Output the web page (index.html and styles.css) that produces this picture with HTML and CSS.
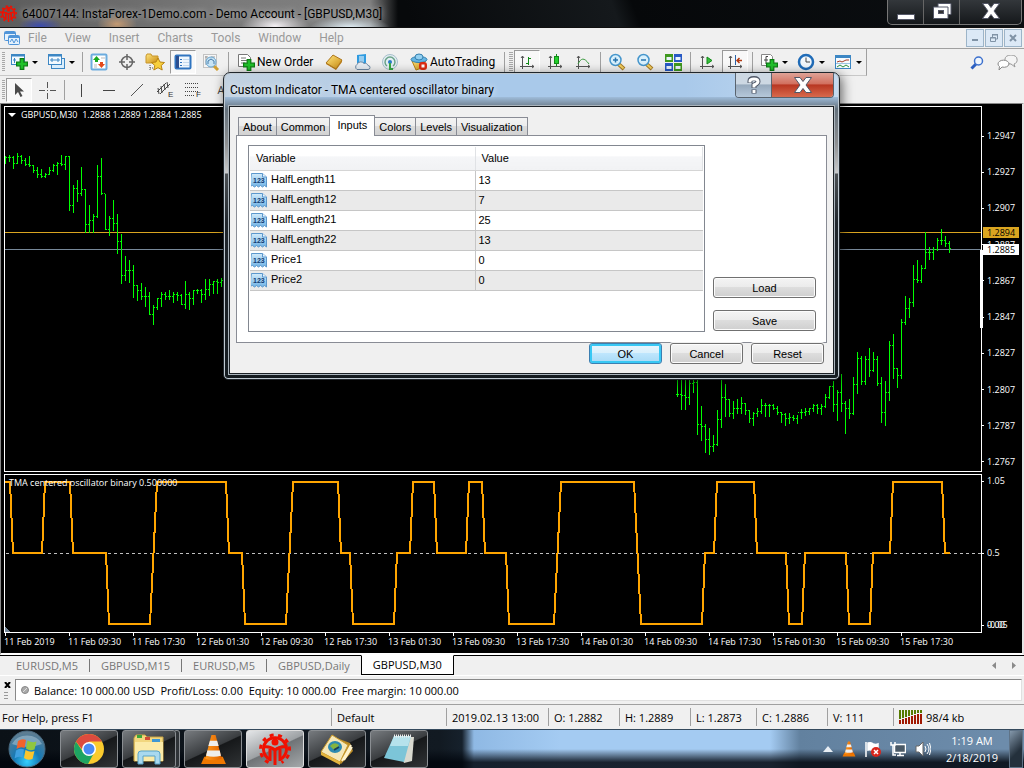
FILE: index.html
```html
<!DOCTYPE html>
<html lang="en">
<head>
  <meta charset="UTF-8" />
  <meta name="viewport" content="width=device-width, initial-scale=1.0" />
  <title>64007144: InstaForex-1Demo.com - Demo Account - [GBPUSD,M30]</title>
  <link rel="stylesheet" href="styles.css">
</head>
<body>
  <!-- shared icon shapes -->
  <svg class="defs" width="0" height="0" aria-hidden="true">
    <defs>
      <linearGradient id="gold" x1="0" y1="0" x2="1" y2="1"><stop offset="0" stop-color="#ffe680"/><stop offset="1" stop-color="#c98a10"/></linearGradient>
      <linearGradient id="sky" x1="0" y1="0" x2="0" y2="1"><stop offset="0" stop-color="#d4ecfb"/><stop offset="1" stop-color="#6fb2e4"/></linearGradient>
      <linearGradient id="cone" x1="0" y1="0" x2="1" y2="0"><stop offset="0" stop-color="#ff9a1e"/><stop offset="1" stop-color="#e06200"/></linearGradient>
      <radialGradient id="orb" cx=".5" cy=".85" r=".8"><stop offset="0" stop-color="#35d0ff"/><stop offset=".45" stop-color="#1579b5"/><stop offset="1" stop-color="#5e7d92"/></radialGradient>
      <symbol id="plus" viewBox="0 0 10 10"><path d="M3.500 .5h3v3h3v3h-3v3h-3v-3h-3v-3h3z" fill="#1fc12a" stroke="#0b7d12"/></symbol>
      <symbol id="insta" viewBox="0 0 32 32">
        <path d="M11 26.500A11.500 11.500 0 1 1 21 26.500" fill="none" stroke="#f01000" stroke-width="3"/>
        <path d="M9.500 29.500A14.500 14.500 0 1 1 22.500 29.500" fill="none" stroke="#f01000" stroke-width="3" stroke-dasharray="4 4.300"/>
        <circle cx="16" cy="9" r="3.500" fill="#f01000"/>
        <path d="M5 14q6-1 11 3 5-4 11-3M11 16v12M21 16v12M16 16v16" fill="none" stroke="#f01000" stroke-width="3"/>
      </symbol>
      <symbol id="vlc" viewBox="0 0 26 30">
        <path d="M4 22h18l3 7H1z" fill="#f07800"/>
        <path d="M11 1h4l6 23q-8 3-16 0z" fill="url(#cone)"/>
        <path d="M9.500 6.500h7l1.500 5h-10zM7 16h12l1.200 5q-7 2-14.400 0z" fill="#eee"/>
      </symbol>
      <symbol id="num" viewBox="0 0 16 16">
        <path d="M.5 1.500h11l4 3.500v10l-2-1.500-2 1.500-2-1.500-2 1.500-2-1.500-2 1.500-2-1.500-3 1z" fill="url(#sky)" stroke="#5b97cc"/>
        <path d="M11.500 1.500V5h4" fill="#eaf5ff" stroke="#5b97cc"/>
        <text x="2" y="11" font-size="7">123</text>
      </symbol>
      <symbol id="lens" viewBox="0 0 18 18">
        <path d="M10 10.500l6 5.500" stroke="#a87a20" stroke-width="4"/><path d="M10.500 11l5 4.500" stroke="#f4d060" stroke-width="2"/>
        <circle cx="7.500" cy="7" r="5.500" fill="#d9f0fc" stroke="#4696cc" stroke-width="1.500"/>
      </symbol>
      <symbol id="axes" viewBox="0 0 18 18"><path d="M4.500 3v13M2 13.500h14M3 5l1.500-2L6 5M14 12l2 1.500-2 1.500" fill="none" stroke="#555"/></symbol>
    </defs>
  </svg>

  <header class="titlebar">
    <svg class="logo" width="17" height="17"><use href="#insta"/></svg>
    <h1>64007144: InstaForex-1Demo.com - Demo Account - [GBPUSD,M30]</h1>
    <div class="win-buttons">
      <button aria-label="Minimize"><svg width="20" height="18"><rect x="1.500" y="12.500" width="17" height="5" fill="#fff" stroke="#555868"/></svg></button>
      <button aria-label="Restore"><svg width="20" height="18"><path d="M6 1.500h13v11h-3v4H1.500V5H6z" fill="#fff" stroke="#555868"/><path d="M6 5h10v8" fill="none" stroke="#555868"/><rect x="6.500" y="8.500" width="5" height="3" fill="#333" stroke="#555868"/></svg></button>
      <button class="wide" aria-label="Close"><svg width="20" height="18"><path d="M1.500 1.500h5.500l3 4 3-4h5.500l-5.500 7.500 5.500 7.500h-5.500l-3-4-3 4h-5.500l5.500-7.500z" fill="#fff" stroke="#555868"/></svg></button>
    </div>
  </header>

  <nav class="menubar">
    <svg width="16" height="16"><rect x=".5" y="1.500" width="11" height="9" rx="1" fill="#e4f1fc" stroke="#4f94d8"/><path d="M1 3h10" stroke="#4f94d8" stroke-width="2"/><rect x="4.500" y="5.500" width="11" height="9" rx="1" fill="#e4f1fc" stroke="#4f94d8"/><path d="M5 7h10" stroke="#4f94d8" stroke-width="2"/><path d="M6 12l2-3 2 4 2-4 2 3" fill="none" stroke="#4f94d8"/></svg>
    <a href="#">File</a>
    <a href="#">View</a>
    <a href="#">Insert</a>
    <a href="#">Charts</a>
    <a href="#">Tools</a>
    <a href="#">Window</a>
    <a href="#">Help</a>
    <div class="mdi-buttons">
      <button aria-label="Minimize chart"><svg width="10" height="10"><path d="M2 7h6" stroke="#8093a6" stroke-width="2"/></svg></button>
      <button aria-label="Restore chart"><svg width="10" height="10"><path d="M3.500 4V2h5v4H7M3 1.500h6M1.500 4.500h5v4h-5zM1 5h6" fill="none" stroke="#8093a6"/></svg></button>
      <button aria-label="Close chart"><svg width="10" height="10"><path d="M2 2l6 6M8 2l-6 6" stroke="#8093a6" stroke-width="2"/></svg></button>
    </div>
  </nav>

  <div class="toolbars">
    <div class="toolbar">
      <div class="group">
        <i class="grip"></i>
        <button class="tool drop" aria-label="New chart"><svg width="18" height="18"><rect x="1.500" y="1.500" width="13" height="10" fill="#f4faff" stroke="#3d87c4"/><path d="M1 2.500h14" stroke="#3d87c4" stroke-width="2"/><path d="M4.500 5v5M3 7h3" stroke="#3d87c4"/><use href="#plus" x="6" y="5" width="12" height="12"/></svg></button>
        <button class="tool drop" aria-label="Profiles"><svg width="18" height="18"><rect x="4.500" y="5.500" width="13" height="10" fill="#dbeefc" stroke="#3d87c4"/><rect x="1.500" y="1.500" width="13" height="10" fill="#f4faff" stroke="#3d87c4"/><path d="M1 2.500h14" stroke="#3d87c4" stroke-width="2"/><path d="M3 7h10M5 5v4M11 5v4" stroke="#3d87c4"/></svg></button>
        <i class="sep"></i>
        <button class="tool" aria-label="Market watch"><svg width="18" height="18"><rect x="1.500" y="1.500" width="15" height="15" rx="1" fill="#fff" stroke="#6cacde" stroke-width="2"/><path d="M3 7l3.500-4L10 7H8v2H5V7z" fill="#18a81f"/><path d="M8 11l3.500 4 3.500-4h-2V9h-3v2z" fill="#e34a1c"/><path d="M4 12h3M11 5h4M4 14h3" stroke="#bbb"/></svg></button>
        <button class="tool" aria-label="Data window"><svg width="18" height="18"><circle cx="9" cy="9" r="5.500" fill="none" stroke="#666" stroke-width="1.500"/><path d="M9 1v6M9 11v6M1 9h6M11 9h6" stroke="#666" stroke-width="1.500"/></svg></button>
        <button class="tool" aria-label="Favorites"><svg width="20" height="18"><path d="M1 3l1-2h4l1 2h6v7H1z" fill="url(#gold)" stroke="#c8962c"/><path d="M5 12v5M5 15h3" stroke="#555" stroke-dasharray="1 1"/><path d="M13 5l2 4 4.500.5-3.300 3 1 4.500-4.200-2.300L8.800 17l1-4.500L6.500 9.500 11 9z" fill="#f7cf3d" stroke="#b98312"/></svg></button>
        <button class="tool pressed" aria-label="Navigator"><svg width="18" height="16"><rect x="1.500" y="1.500" width="15" height="13" rx="1" fill="#eef6fd" stroke="#2f74c0" stroke-width="2"/><path d="M3.500 2v12" stroke="#2b4f90" stroke-width="3"/><path d="M6 5.500h2M6 8.500h2M6 11.500h2" stroke="#2f74c0"/><path d="M9 5.500h6M9 8.500h6M9 11.500h6" stroke="#c4d9ed"/></svg></button>
        <button class="tool" aria-label="Strategy tester"><svg width="18" height="18"><rect x="1.500" y="1.500" width="13" height="13" fill="#f6f6f6" stroke="#c3c3c3"/><path d="M3 4h3M9 4h4M4 3v9" stroke="#999"/><path d="M11 12l5 5" stroke="#d1a033" stroke-width="3"/><circle cx="9" cy="9" r="5" fill="#c8e4f5" stroke="#69a5cf"/><path d="M6 11V8l3-2 3 2v3" fill="none" stroke="#477caa"/></svg></button>
        <i class="sep"></i>
        <button class="tool text new-order"><svg width="18" height="18"><path d="M1.500 1.500h9l3 3v9h-12z" fill="#fff" stroke="#777"/><path d="M4 5h5M4 7.500h6M4 10h4" stroke="#777"/><use href="#plus" x="6" y="6" width="12" height="12"/></svg>New Order</button>
        <button class="tool" aria-label="MetaEditor"><svg width="18" height="18"><path d="M1 10l7-8 9 5-6 9z" fill="url(#gold)" stroke="#ad761c"/><path d="M1 10l10 6 6-9v2l-6 8-10-6z" fill="#b97b14"/></svg></button>
        <button class="tool" aria-label="Virtual hosting"><svg width="18" height="18"><path d="M4 2l9-1v9H4z" fill="#2f9be0"/><path d="M6 4h5M6 6h5M6 8h5" stroke="#fff"/><path d="M4 16.500a3 3 0 0 1 0-5 4 4 0 0 1 7-1 3 3 0 0 1 4 2 2 2 0 0 1 0 4z" fill="#e5ecf3" stroke="#6d89a5"/></svg></button>
        <button class="tool" aria-label="Signals"><svg width="18" height="18"><circle cx="9" cy="9" r="7.500" fill="#e3eef3" stroke="#a7bfcb"/><path d="M6 13a5 5 0 1 1 6 0" fill="none" stroke="#6aa389" stroke-width="1.500"/><circle cx="9" cy="9" r="2" fill="#2a7cc7"/><path d="M9 10v6h3" stroke="#37a845" stroke-width="2" fill="none"/></svg></button>
        <button class="tool text auto-trading"><svg width="18" height="18"><path d="M2 8l14-1-4 8-6 2z" fill="url(#gold)" stroke="#b98312"/><ellipse cx="9" cy="6.500" rx="8" ry="3" fill="#64b5e4" stroke="#337fae"/><ellipse cx="9" cy="4" rx="4" ry="3" fill="#93d0f1" stroke="#337fae"/><rect x="9" y="9" width="8" height="8" rx="3" fill="#dc2c12"/><rect x="11.500" y="11.500" width="3" height="3" fill="#fff"/></svg>AutoTrading</button>
        <i class="sep"></i>
        <i class="grip"></i>
        <button class="tool pressed" aria-label="Bar chart"><svg width="18" height="18"><use href="#axes"/><path d="M10.500 4v8M8 10.500h2M11 5.500h2" stroke="#128a18" fill="none"/></svg></button>
        <button class="tool" aria-label="Candlesticks"><svg width="18" height="18"><use href="#axes"/><path d="M10.500 1v12" stroke="#128a18"/><rect x="8.500" y="3.500" width="4" height="7" fill="#25d02d" stroke="#128a18"/></svg></button>
        <button class="tool" aria-label="Line chart"><svg width="18" height="18"><use href="#axes"/><path d="M4 11c3-6 6-7 11 0" fill="none" stroke="#3a9a3e"/></svg></button>
        <i class="sep"></i>
        <button class="tool" aria-label="Zoom in"><svg width="18" height="18"><use href="#lens"/><path d="M5 7h5M7.500 4.500v5" stroke="#2874ae" stroke-width="1.500"/></svg></button>
        <button class="tool" aria-label="Zoom out"><svg width="18" height="18"><use href="#lens"/><path d="M5 7h5" stroke="#2874ae" stroke-width="1.500"/></svg></button>
        <button class="tool" aria-label="Tile windows"><svg width="18" height="18"><path d="M1 1h8v8H1zM10 10h8v8h-8z" fill="#3f981d"/><path d="M10 1h8v8h-8zM1 10h8v8H1z" fill="#2759c4"/><path d="M2.500 5.500h5M11.500 5.500h5M2.500 14.500h5M11.500 14.500h5" stroke="#e9f2fb" stroke-width="3"/></svg></button>
        <i class="sep"></i>
        <button class="tool" aria-label="Auto scroll"><svg width="18" height="18"><use href="#axes"/><path d="M9 4l5 3.500-5 3.500z" fill="#38c13d" stroke="#128a18"/></svg></button>
        <button class="tool pressed" aria-label="Chart shift"><svg width="18" height="18"><use href="#axes"/><path d="M9.500 2v10" stroke="#2b63a8"/><path d="M11 7.500h5M13.500 5L11 7.500l2.500 2.500" fill="none" stroke="#b33a12" stroke-width="1.500"/></svg></button>
        <i class="sep"></i>
        <button class="tool drop" aria-label="Indicators"><svg width="18" height="18"><path d="M1.500 1.500h9l2 2v9h-11z" fill="#fff" stroke="#888"/><path d="M8 3.500H6V11M4 7h4" fill="none" stroke="#444"/><use href="#plus" x="6" y="6" width="12" height="12"/></svg></button>
        <button class="tool drop" aria-label="Periods"><svg width="18" height="18"><circle cx="9" cy="9" r="7" fill="#f3f8fc" stroke="#206cb8" stroke-width="2.500"/><path d="M9 4.500V9h4" fill="none" stroke="#444"/></svg></button>
        <button class="tool drop" aria-label="Templates"><svg width="18" height="16"><rect x="1.500" y="1.500" width="15" height="13" fill="#f6fbff" stroke="#3d87c4"/><path d="M1 2.500h16" stroke="#3d87c4" stroke-width="3"/><path d="M3 8l3-1 2 1 4-2 3 0" fill="none" stroke="#a43b26"/><path d="M2 9.500h14" stroke="#9ec5e2"/><path d="M3 13l3-2 3 2 3-2 3 2" fill="none" stroke="#2e9340"/></svg></button>
      </div>
      <div class="side">
        <svg width="14" height="14"><path d="M1.500 12.500L6 8" stroke="#2c5fc0" stroke-width="3"/><circle cx="8.500" cy="5" r="4" fill="#f0f6fd" stroke="#3c70cd" stroke-width="1.500"/></svg>
        <svg width="22" height="16"><path d="M8 4a6 4 0 0 1 12 0 4 4 0 0 1-3 5l1 3-4-3a6 4 0 0 1-6-5z" fill="#f4f4f4" stroke="#999"/><path d="M1 9a5 3.500 0 0 1 11 0 5 3.500 0 0 1-7 3l-3 3 .5-3.500A3 3 0 0 1 1 9z" fill="#fff" stroke="#888"/></svg>
      </div>
    </div>
    <div class="toolbar">
      <i class="grip"></i>
      <button class="tool pressed" aria-label="Cursor"><svg width="18" height="18"><path d="M5 2v12l3-3 2.500 5 2-1-2.500-4.500H14z" fill="#4b4b4b"/></svg></button>
      <button class="tool" aria-label="Crosshair"><svg width="18" height="18"><path d="M9.500 1v6M9.500 12v6M1 9.500h6M12 9.500h6M9 9.500h1" stroke="#555"/></svg></button>
      <i class="sep"></i>
      <button class="tool" aria-label="Vertical line"><svg width="18" height="18"><path d="M9.500 3v13" stroke="#444"/></svg></button>
      <button class="tool" aria-label="Horizontal line"><svg width="18" height="18"><path d="M3 9.500h12" stroke="#444"/></svg></button>
      <button class="tool" aria-label="Trendline"><svg width="18" height="18"><path d="M3 15L15 3" stroke="#555"/></svg></button>
      <button class="tool" aria-label="Equidistant channel"><svg width="20" height="20"><path d="M2 12l9-9M5 14l10-10M3 8l1 6M6 6l1 7M9 4l1 6M12 2l1 6" fill="none" stroke="#444"/><text x="13" y="17">E</text></svg></button>
      <button class="tool" aria-label="Fibonacci"><svg width="20" height="20"><path d="M2 3.500h14M2 7.500h14M2 11.500h14M2 15.500h9" stroke="#444" stroke-dasharray="1 1"/><text x="13" y="17">F</text></svg></button>
      <button class="tool letter">A</button>
    </div>
  </div>

  <main class="workspace">
    <section class="chart">
      <div class="plot">
        <div class="caption"><i class="down"></i>GBPUSD,M30&nbsp; 1.2888 1.2889 1.2884 1.2885</div>
        <svg id="bars" width="976" height="364" shape-rendering="crispEdges">
          <path class="line-ask" d="M0 125.500h976"/>
          <path class="line-bid" d="M0 142.500h976"/>
        </svg>
      </div>
      <div class="scale prices">
        <span>1.2947</span><span>1.2927</span><span>1.2907</span><span>1.2887</span><span>1.2867</span>
        <span>1.2847</span><span>1.2827</span><span>1.2807</span><span>1.2787</span><span>1.2767</span>
        <b class="tag ask">1.2894</b>
        <b class="tag bid">1.2885</b>
        <i class="thumb"></i>
      </div>
    </section>
    <section class="chart">
      <div class="plot">
        <div class="caption name">TMA centered oscillator binary 0.500000</div>
        <svg id="osc" width="976" height="157" shape-rendering="crispEdges">
          <path class="line-mid" d="M1 78.500h975"/>
          <path d="M0 152l5 5H0z" fill="#778899"/>
        </svg>
      </div>
      <div class="scale levels"><span>1.05</span><span>0.5</span><span>0.00<b class="low">-0.05</b></span></div>
    </section>
    <div class="times">
      <span>11 Feb 2019</span><span>11 Feb 09:30</span><span>11 Feb 17:30</span><span>12 Feb 01:30</span><span>12 Feb 09:30</span>
      <span>12 Feb 17:30</span><span>13 Feb 01:30</span><span>13 Feb 09:30</span><span>13 Feb 17:30</span><span>14 Feb 01:30</span>
      <span>14 Feb 09:30</span><span>14 Feb 17:30</span><span>15 Feb 01:30</span><span>15 Feb 09:30</span><span>15 Feb 17:30</span>
    </div>
  </main>

  <nav class="chart-tabs">
    <a href="#">EURUSD,M5</a>
    <a href="#">GBPUSD,M15</a>
    <a href="#">EURUSD,M5</a>
    <a href="#">GBPUSD,Daily</a>
    <a href="#" class="active">GBPUSD,M30</a>
    <svg class="arrows" width="24" height="9"><path d="M4 1v7L0 4.500zM20 1v7l4-3.500z" fill="#8a8a8a"/></svg>
  </nav>

  <section class="terminal">
    <div class="terminal-side">
      <button aria-label="Close terminal"><svg width="7" height="6"><path d="M1 0l5 6M6 0L1 6" stroke="#000" stroke-width="2"/></svg></button>
      <i></i>
    </div>
    <div class="balance">
      <svg width="8" height="8"><circle cx="4" cy="4" r="3.500" fill="#aaa" stroke="#888"/><path d="M2 6l4-4" stroke="#ddd"/></svg>
      <span>Balance: 10 000.00 USD&nbsp; Profit/Loss: 0.00&nbsp; Equity: 10 000.00&nbsp; Free margin: 10 000.00</span>
    </div>
  </section>

  <footer class="status">
    <span class="help">For Help, press F1</span>
    <span class="profile">Default</span>
    <span class="date">2019.02.13 13:00</span>
    <span>O: 1.2882</span>
    <span>H: 1.2889</span>
    <span class="narrow">L: 1.2873</span>
    <span>C: 1.2886</span>
    <span class="narrow">V: 111</span>
    <span class="traffic"><svg width="24" height="14"><path d="M1 0v9M4 0v8M7 0v7M10 0v6M13 0v5M16 0v4M19 0v3M22 0v3" stroke="#567a00" stroke-width="2"/><path d="M1 10v4M4 9v5M7 8v6M10 7v7M13 6v8M16 5v9M19 4v10M22 4v10" stroke="#a01800" stroke-width="2"/></svg>98/4 kb</span>
  </footer>

  <div class="taskbar">
    <button class="start" aria-label="Start"><svg width="38" height="38"><circle cx="19" cy="19" r="18" fill="url(#orb)" stroke="#4a6a80"/><path d="M4 14a16 13 0 0 1 30 0q-15 6-30 0z" fill="#fff" opacity=".3"/><path d="M10 11q4-3 8-1l-1.500 8q-4-2-8 1z" fill="#f2632b"/><path d="M19.500 10.500q5 3 9 1l-2 8q-5 2-8.500-1z" fill="#8fc73e"/><path d="M8 20.500q4-3 8-1l-1.500 8q-4-2-8 1z" fill="#3fa0e0"/><path d="M17.500 20q5 3 9 1l-2 8q-5 2-8.500-1z" fill="#fbc52c"/></svg></button>
    <button class="app" aria-label="Chrome"><svg width="32" height="32"><circle cx="16" cy="16" r="15" fill="#fbcb2e"/><path d="M3 8.500A15 15 0 0 0 15 31l6-11-5-4-6 3z" fill="#1da462"/><path d="M3 8.500A15 15 0 0 1 29 8.500H16l-6 9z" fill="#dd4b3e"/><circle cx="16" cy="16" r="7" fill="#fff"/><circle cx="16" cy="16" r="5.500" fill="#4a8af4"/></svg></button>
    <button class="app stack" aria-label="Explorer"><svg width="32" height="32"><path d="M1 5l2-3h9l2 2h16v24H1z" fill="#f1d67e" stroke="#c9a544"/><path d="M4 2h5v3H4z" fill="#3aa53a"/><path d="M12 4h5v3h-5z" fill="#cf4a35"/><path d="M19 6h8v3h-8z" fill="#3e97d3"/><path d="M2 9h28v19H2z" fill="#fbeaa7"/><path d="M5 31V21q0-3 3-3h16q3 0 3 3v10h-5v-8H10v8z" fill="#a9d9ef" stroke="#59a3c7"/></svg></button>
    <button class="app" aria-label="VLC"><svg width="27" height="31"><use href="#vlc"/></svg></button>
    <button class="app current" aria-label="InstaForex"><svg width="32" height="32"><use href="#insta"/></svg></button>
    <button class="app" aria-label="MetaEditor"><svg width="34" height="32"><path d="M1 21L14 4l16 6 3 8-12 13z" fill="#b98a25"/><path d="M1 19L12 2l16 10-8 17z" fill="#f5e7b8" stroke="#c99a2b"/><path d="M22 28l9-16M24 27l8-13" stroke="#fff3cc" stroke-width="2"/><ellipse cx="15" cy="14" rx="7" ry="6" fill="#2d8ab0"/><path d="M10 13q4-5 9-1-2 5-5 5z" fill="#84b440"/><path d="M14 17l5-3" stroke="#173c5a" stroke-width="2"/><path d="M1 19l19 10v3L1 22z" fill="#e3b43d"/></svg></button>
    <button class="app" aria-label="Notepad"><svg width="32" height="32"><path d="M12 4h19l-2 24-8 2z" fill="#d9d9cf"/><path d="M11 3h17l-7 26L1 25z" fill="#7cc5d8"/><path d="M11 3h17l-3 10H7z" fill="#b6e2ec"/><path d="M11 3h18" stroke="#eee" stroke-width="3" stroke-dasharray="1 1"/></svg></button>
    <div class="tray">
      <svg width="10" height="6"><path d="M0 6l5-6 5 6z" fill="#e8eef4"/></svg>
      <svg width="14" height="16"><use href="#vlc"/></svg>
      <svg width="16" height="16"><path d="M1 1v15M3 2q4-1 5 1 3 1 5 0v7q-3 1-5 0-2-2-5-1z" fill="#fff" stroke="#fff" stroke-width="1.500"/><circle cx="11" cy="11" r="5" fill="#d9261c"/><path d="M9 9l4 4M13 9l-4 4" stroke="#fff" stroke-width="1.500"/></svg>
      <svg width="16" height="16"><rect x="4.500" y="3.500" width="11" height="8" fill="#4a5966" stroke="#fff" stroke-width="1.500"/><path d="M1 1v3h4V1M3 4v10h3M7 14.500h7M10 12v2" fill="none" stroke="#fff" stroke-width="1.500"/></svg>
      <svg width="16" height="16"><path d="M1 5h3l4-4v14l-4-4H1z" fill="#fff" stroke="#666"/><path d="M10 5q2 3 0 6M12 3q4 5 0 10M14.500 2q3 6 0 12" fill="none" stroke="#fff"/></svg>
    </div>
    <time class="clock">1:19 AM<br>2/18/2019</time>
    <button class="show-desktop" aria-label="Show desktop"></button>
  </div>

  <div class="dialog" role="dialog" aria-label="Custom Indicator">
    <div class="dialog-title">
      <h2>Custom Indicator - TMA centered oscillator binary</h2>
      <div class="dialog-buttons">
        <button class="help-btn" aria-label="Help"><svg width="14" height="20"><path d="M3 8V6q0-2.500 4-2.500t4 3q0 2-4 3.500v3M7 14.500v4" fill="none" stroke="#505868" stroke-width="5"/><path d="M3 7.500V6q0-2 4-2t4 2.500q0 2-4 3.500v2.500M7 15v3" fill="none" stroke="#fff" stroke-width="3"/></svg></button>
        <button class="close-btn" aria-label="Close"><svg width="20" height="16"><path d="M1.500 .5h5.500l3 4 3-4h5.500l-5.500 7.500 5.500 7.500h-5.500l-3-4-3 4h-5.500l5.500-7.500z" fill="#fff" stroke="#505868"/></svg></button>
      </div>
    </div>
    <div class="dialog-body">
      <div class="tabs">
        <button>About</button>
        <button>Common</button>
        <button class="active">Inputs</button>
        <button>Colors</button>
        <button>Levels</button>
        <button>Visualization</button>
      </div>
      <div class="pane">
        <div class="list">
          <table>
            <thead><tr><th>Variable</th><th>Value</th></tr></thead>
            <tbody>
              <tr><td><svg width="16" height="16"><use href="#num"/></svg>HalfLength11</td><td>13</td></tr>
              <tr><td><svg width="16" height="16"><use href="#num"/></svg>HalfLength12</td><td>7</td></tr>
              <tr><td><svg width="16" height="16"><use href="#num"/></svg>HalfLength21</td><td>25</td></tr>
              <tr><td><svg width="16" height="16"><use href="#num"/></svg>HalfLength22</td><td>13</td></tr>
              <tr><td><svg width="16" height="16"><use href="#num"/></svg>Price1</td><td>0</td></tr>
              <tr><td><svg width="16" height="16"><use href="#num"/></svg>Price2</td><td>0</td></tr>
            </tbody>
          </table>
        </div>
        <div class="pane-side">
          <button class="btn">Load</button>
          <button class="btn">Save</button>
        </div>
      </div>
      <div class="actions">
        <button class="btn default">OK</button>
        <button class="btn">Cancel</button>
        <button class="btn">Reset</button>
      </div>
    </div>
  </div>

  <script>
    // [high, low, close] per bar, the open tick is the previous close
    const left = [
      [49,56,50],[48,54,50],[49,61,56],[46,56,49],[48,56,53],[51,58,57],[49,59,58],[58,65,63],[60,70,67],[62,70,69],
      [66,70,67],[60,67,63],[57,64,58],[55,67,56],[48,58,57],[49,62,49],[49,103,98],[78,105,81],[73,94,86],[60,88,82],
      [82,125,117],[98,125,113],[107,125,109],[58,110,69],[51,87,86],[87,122,122],[109,128,111],[93,123,116],[107,146,134],[127,176,168],
      [149,173,163],[153,175,163],[158,190,178],[178,193,183],[176,192,189],[180,199,189],[185,207,207],[198,217,200],[191,202,191],[185,199,187],
      [185,192,189],[183,192,189],[185,195,187],[185,193,188],[187,197,197],[174,201,187],[185,202,191],[183,197,183],[182,186,183],[182,195,187],
      [172,192,182],[172,188,177],[174,186,174],[172,186,175],[171,179,173]
    ];
    const right = [
      [270,289,287],[270,302,288],[270,302,290],[270,297,276],[270,285,275],[270,327,317],[299,333,319],[317,345,332],[321,347,339],[328,344,337],
      [303,338,312],[273,320,290],[277,309,292],[292,309,306],[294,311,301],[292,306,301],[290,306,296],[296,307,303],[303,315,311],[305,318,306],
      [301,309,304],[292,306,298],[296,309,298],[297,309,298],[297,302,301],[299,307,305],[305,315,307],[306,318,311],[306,316,310],[308,313,311],
      [308,316,305],[302,311,305],[301,308,304],[301,307,301],[297,304,298],[297,306,301],[297,307,299],[287,300,290],[279,291,279],[274,304,297],
      [283,313,285],[267,304,296],[294,326,301],[292,311,306],[270,307,277],[245,286,251],[249,277,274],[249,277,252],[241,269,263],[245,264,252],
      [249,278,276],[270,315,305],[274,318,285],[234,293,238],[227,271,261],[261,280,268],[212,271,215],[189,217,201],[191,210,195],[158,199,172],
      [153,175,173],[158,175,161],[125,161,145],[140,152,145],[140,152,142],[131,143,133],[122,137,133],[129,139,136],[134,145,141]
    ];

    function addPath(id, d, cls) {
      const path = document.createElementNS('http://www.w3.org/2000/svg', 'path');
      path.setAttribute('d', d);
      path.setAttribute('class', cls);
      document.getElementById(id).appendChild(path);
    }

    function barPath(bars, first) {
      let d = '';
      bars.forEach(([high, low, close], i) => {
        const x = (first + i) * 4;
        const open = i ? bars[i - 1][2] : close;
        d += `M${x} ${high}h1V${low + 1}h-1z`;
        d += `M${x - 1} ${open}h1v1h-1zM${x + 1} ${close}h1v1h-1z`;
      });
      return d;
    }
    addPath('bars', barPath(left, 0) + barPath(right, 168), 'bar');

    // oscillator: [x, value]
    const osc = [
      [0,1],[5,1],[8,.5],[37,.5],[40,1],[65,1],[68,.5],[101,.5],[104,0],[145,0],[152,1],[221,1],[224,.5],[237,.5],[240,0],
      [281,0],[288,1],[333,1],[336,.5],[345,.5],[348,0],[389,0],[392,.5],[405,.5],[408,1],[429,1],[432,.5],[461,.5],[464,1],
      [477,1],[480,.5],[501,.5],[504,0],[549,0],[556,1],[629,1],[636,0],[697,0],[700,.5],[709,.5],[712,1],[749,1],[752,.5],
      [781,.5],[784,0],[797,0],[800,.5],[841,.5],[844,0],[865,0],[868,.5],[885,.5],[888,1],[937,1],[940,.5],[945,.5]
    ];
    addPath('osc', 'M' + osc.map(([x, v]) => `${x} ${149 - v * 142}`).join('L'), 'osc');
  </script>
</body>
</html>
```
FILE: styles.css
```css
* { box-sizing: border-box; }
html, body {
  margin: 0;
  height: 100%;
}
body {
  display: flex;
  flex-direction: column;
  min-height: 768px;
  position: relative;
  overflow-x: hidden;
  background: #f0f0f0;
  color: #000;
  font-family: "Open Sans", "Noto Sans", sans-serif;
  font-size: 11px;
}
button {
  font: inherit;
  color: inherit;
  padding: 0;
  border: 0;
  background: none;
}
a { color: inherit; text-decoration: none; }
h1, h2 { margin: 0; font: 12px Roboto, "Open Sans", sans-serif; }
svg { flex: none; display: block; }
.defs { position: absolute; }

/* main window title */
.titlebar {
  flex: none;
  display: flex;
  align-items: center;
  height: 28px;
  padding-right: 2px;
  border-bottom: 1px solid #111;
  background:
    radial-gradient(ellipse 22px 9px at 40px 26px, #3c4cae, transparent),
    radial-gradient(ellipse 20px 10px at 117px 24px, #c49a72, transparent),
    radial-gradient(ellipse 34px 14px at 275px 26px, #f4f0f4, transparent),
    radial-gradient(ellipse 40px 12px at 350px 28px, #e6f4fc, transparent),
    linear-gradient(90deg, #5c5c5c 0, #7a7a7a 230px, #808080 370px, transparent 398px),
    linear-gradient(70deg, #07090b 40%, #15191c 60%, #06080a 62%, #0c0f12);
}
.titlebar h1 { margin-left: 5px; text-shadow: 0 0 6px #ccc; white-space: nowrap; }
.win-buttons {
  display: flex;
  align-self: flex-start;
  margin-left: auto;
  height: 25px;
  border: 1px solid #777;
  border-top: 0;
  border-radius: 0 0 5px 5px;
  background: linear-gradient(#33373b, #15181b);
}
.win-buttons button {
  display: flex;
  justify-content: center;
  align-items: flex-start;
  width: 36px;
  padding-top: 2px;
  border-right: 1px solid #666;
}
.win-buttons .wide { width: 61px; border: 0; }

/* menu */
.menubar {
  flex: none;
  display: flex;
  align-items: center;
  gap: 18px;
  height: 21px;
  padding: 0 2px 0 4px;
  border-bottom: 1px solid #a0a0a0;
  color: #999;
  font: 12px Roboto, "Open Sans", sans-serif;
}
.menubar > svg { margin-right: -10px; }
.mdi-buttons { display: flex; gap: 1px; margin-left: auto; }
.mdi-buttons button {
  display: flex;
  align-items: center;
  justify-content: center;
  width: 18px;
  height: 18px;
  border: 1px solid #9cb4c8;
  background: #dce9f6;
}

/* toolbars */
.toolbars { flex: none; }
.toolbar { display: flex; align-items: center; height: 27px; }
.group {
  display: flex;
  align-items: center;
  height: 27px;
  border-right: 1px solid #a0a0a0;
  border-bottom: 1px solid #c8c8c8;
}
.grip {
  width: 5px;
  height: 20px;
  border-left: 2px solid #f0f0f0;
  background: repeating-linear-gradient(#a8a8a8 0 1px, #f0f0f0 1px 2px);
}
.group .sep + .grip { width: 6px; }
.sep { width: 6px; height: 20px; background: linear-gradient(#a0a0a0, #a0a0a0) 3px 0 / 1px 100% no-repeat; }
.tool {
  display: flex;
  align-items: center;
  justify-content: center;
  width: 28px;
  height: 24px;
}
.tool text { font: 8px "Liberation Sans", sans-serif; fill: #333; }
.tool.pressed {
  width: 26px;
  margin: 0 1px;
  border: 1px solid #fff;
  border-top-color: #999;
  border-left-color: #999;
  background: #f8f8f8;
}
.tool.drop { width: 37px; justify-content: flex-start; gap: 4px; padding-left: 5px; }
.tool.drop::after {
  content: "";
  border: 3px solid transparent;
  border-top-color: #000;
  border-bottom: 0;
}
.tool.text {
  justify-content: flex-start;
  gap: 2px;
  padding-left: 6px;
  font: 12px Roboto, "Open Sans", sans-serif;
  white-space: nowrap;
}
.new-order { width: 89px; }
.auto-trading { width: 97px; }
.letter { color: #444; }
.side { display: flex; align-items: center; gap: 13px; margin-left: auto; padding-right: 5px; }

/* charts */
.workspace {
  flex: 1;
  display: flex;
  flex-direction: column;
  gap: 2px;
  padding: 2px 0 0 3px;
  border-top: 1px solid #888;
  border-left: 1px solid #888;
  border-right: 2px solid #e4e4e4;
  border-bottom: 2px solid #fff;
  background: #000;
  color: #fff;
  font-size: 9px;
  line-height: 12px;
}
.chart { display: flex; flex: none; height: 366px; }
.chart:nth-child(2) { height: 159px; }
.plot { flex: 1; min-width: 0; position: relative; overflow: hidden; border: 1px solid #fff; }
.caption {
  position: absolute;
  top: 2px;
  left: 3px;
  display: flex;
  align-items: center;
  white-space: nowrap;
}
.caption.name { left: 4px; z-index: 1; }
.down { margin-right: 5px; border: 4px solid transparent; border-top-color: #fff; border-bottom: 0; }
.bar { fill: #00ff00; }
.osc { fill: none; stroke: #ffa500; stroke-width: 2; }
.line-ask { stroke: #daa520; }
.line-bid { stroke: #778899; }
.line-mid { stroke: #c0c0c0; stroke-dasharray: 3 3; }
.scale { position: relative; flex: none; display: flex; flex-direction: column; justify-content: space-between; width: 40px; }
.scale span { display: flex; align-items: center; position: relative; height: 12px; }
.scale span::before { content: ""; width: 2px; height: 1px; margin-right: 3px; background: #fff; }
.prices { padding: 24px 0 4px; }
.tag { position: absolute; left: 1px; width: 36px; height: 11px; line-height: 11px; padding-left: 4px; font-weight: normal; color: #000; }
.ask { top: 121px; background: #daa520; }
.bid { top: 138px; background: #fff; }
.thumb { position: absolute; left: -2px; top: 144px; width: 3px; height: 78px; background: #fff; }
.levels { padding: 1px 0 2px; }
.low { position: absolute; left: 5px; font-weight: normal; }
.times { display: flex; margin-top: -2px; height: 19px; overflow: hidden; }
.times span { flex: none; width: 64px; padding-top: 3px; white-space: nowrap; background: linear-gradient(#fff, #fff) 1px 0 / 1px 3px no-repeat; }

/* chart tabs */
.chart-tabs {
  flex: none;
  display: flex;
  align-items: center;
  height: 21px;
  padding: 0 8px 0 5px;
  border-top: 1px solid #000;
  border-bottom: 1px solid #fff;
  color: #777;
}
.chart-tabs a { padding: 0 11px; line-height: 13px; border-right: 1px solid #777; }
.chart-tabs a:nth-child(4) { border: 0; }
.chart-tabs .active {
  align-self: flex-start;
  margin-top: -1px;
  line-height: 18px;
  border: 1px solid #000;
  border-top-color: #fff;
  background: #fff;
  color: #000;
}
.arrows { margin-left: auto; }

/* terminal and status */
.terminal { flex: none; display: flex; height: 29px; border-bottom: 1px solid #a0a0a0; padding: 3px 2px 3px 0; }
.terminal-side { display: flex; flex-direction: column; gap: 4px; width: 15px; padding: 3px 0 0 4px; }
.terminal-side i { width: 4px; height: 9px; background: repeating-linear-gradient(#999 0 1px, #f0f0f0 1px 3px); }
.balance {
  flex: 1;
  display: flex;
  align-items: center;
  gap: 5px;
  padding-left: 5px;
  border: 1px solid #e0e0e0;
  border-top-color: #888;
  border-left-color: #888;
  background: #fff;
  white-space: nowrap;
}
.status { flex: none; display: flex; align-items: center; height: 24px; overflow: hidden; }
.status span { flex: none; display: flex; align-items: center; width: 71px; height: 18px; padding-left: 5px; border-left: 1px solid #a0a0a0; white-space: nowrap; }
.status .help { flex: 1; padding-left: 2px; border: 0; }
.status .profile { width: 115px; }
.status .date { width: 102px; }
.status .narrow { width: 66px; }
.status .traffic { gap: 3px; width: 131px; }

/* taskbar */
.taskbar {
  flex: none;
  display: flex;
  align-items: center;
  gap: 4px;
  height: 39px;
  padding: 0 1px 0 8px;
  border-top: 1px solid #34495c;
  background:
    linear-gradient(transparent 50%, rgba(0, 5, 12, .85) 85%),
    linear-gradient(90deg, #0b1117 0, #121a22 440px, #16212c 462px, #8fb9e4 474px, #a4cbf2 560px, #a4cbf2 770px, #62819f 800px, #6d8cab 1000px);
}
.start { width: 38px; margin-right: 10px; }
.app {
  display: flex;
  align-items: center;
  justify-content: center;
  width: 58px;
  height: 38px;
  border: 1px solid #8a8e92;
  border-radius: 3px;
  background: linear-gradient(155deg, #777b7f, #3a3d40 48%, #16181a 50%, #303335);
}
.stack { width: 54px; margin-right: 4px; box-shadow: 4px 0 0 -1px #303438, 4px 0 0 0 #8a8e92; }
.current { background: linear-gradient(155deg, #e4e6e8, #9da1a4 48%, #6f7376 50%, #a4a8aa); border-color: #ddd; }
.tray { display: flex; align-items: center; gap: 9px; margin: 0 4px 0 auto; }
.clock { width: 66px; color: #fff; text-align: center; line-height: 17px; }
.show-desktop { width: 14px; height: 38px; border: 1px solid #5f7387; background: linear-gradient(135deg, #8498ab, #24303c 60%); }

/* indicator dialog */
.dialog {
  position: absolute;
  top: 72px;
  left: 223px;
  width: 617px;
  padding: 0 5px 5px;
  border: 1px solid #20262c;
  border-radius: 7px 7px 5px 5px;
  background:
    linear-gradient(90deg, #c3d2e1 0, #a9c9ea 40%, #a9c9ea 75%, #c4daf0 100%) 0 0 / 100% 24px no-repeat,
    linear-gradient(#c3d2e1 0, #a9c9ea 22px, #64717c 36px, #8d8f91 70px, #c9cacb 100px, #4c5155 101px, #20262c 150px, #141b20);
  box-shadow: inset 0 0 0 1px #bfc9d1, 2px 3px 12px rgba(0, 0, 0, .6);
}
.dialog-title { display: flex; align-items: center; height: 33px; }
.dialog-title h2 { margin-left: 1px; text-shadow: 0 0 6px #fff; white-space: nowrap; }
.dialog-buttons { display: flex; align-self: flex-start; margin-left: auto; height: 25px; border: 1px solid #59636e; border-top: 0; border-radius: 0 0 4px 4px; overflow: hidden; }
.dialog-buttons button { display: flex; align-items: center; justify-content: center; }
.help-btn { width: 36px; background: linear-gradient(#cdd8e3 45%, #97aabd 50%, #b6c8da); border-right: 1px solid #59636e; }
.close-btn { width: 61px; background: linear-gradient(#dfa397 0, #d2705f 45%, #b83722 50%, #d7694d); }
.dialog-body {
  height: 268px;
  padding: 8px 6px 0;
  border: 1px solid #1c2126;
  background: #f0f0f0;
  box-shadow: 0 0 0 1px #aab4bc;
  font-family: "Liberation Sans", Arial, sans-serif;
}
.tabs { display: flex; align-items: flex-end; height: 20px; padding-left: 2px; }
.tabs button {
  height: 18px;
  padding: 0 4px;
  border: 1px solid #898c95;
  border-bottom: 0;
  background: linear-gradient(#f3f3f3, #ececec 50%, #dcdcdc 50%, #d2d2d2);
}
.tabs button + button { border-left: 0; }
.tabs .active { height: 21px; margin-bottom: -1px; padding: 0 7px 3px; background: #fff; position: relative; }
.pane { display: flex; gap: 8px; height: 208px; padding: 9px 10px 10px 11px; border: 1px solid #898c95; background: #fff; }
.list { flex: 1; padding: 1px; border: 1px solid #828790; }
table { width: 100%; border-collapse: collapse; table-layout: fixed; }
th {
  height: 23px;
  padding: 0 6px;
  border-right: 1px solid #e0e2e5;
  border-bottom: 1px solid #d5d5d5;
  background: linear-gradient(#fff 40%, #f5f6f8 42%, #f1f2f4);
  font-weight: normal;
  text-align: left;
}
th:first-child { width: 225px; }
td { height: 20px; padding: 0 3px; border-bottom: 1px solid #c6c6c6; }
td:first-child { padding: 0 1px; border-right: 1px solid #c6c6c6; }
td svg { display: inline-block; margin-right: 4px; vertical-align: middle; }
#num text { font: bold 7px "Liberation Sans", sans-serif; fill: #123d73; }
tbody tr:nth-child(even) { background: #eaeaea; }
.pane-side { display: flex; flex-direction: column; justify-content: flex-end; gap: 12px; width: 103px; padding-bottom: 1px; }
.btn {
  height: 21px;
  border: 1px solid #707070;
  border-radius: 3px;
  background: linear-gradient(#f4f4f4, #ebebeb 48%, #dddddd 50%, #cfcfcf);
  box-shadow: inset 0 0 0 1px #fcfcfc;
}
.actions { display: flex; justify-content: flex-end; gap: 8px; padding-right: 3px; }
.actions .btn { width: 73px; box-shadow: inset 0 0 0 1px #fcfcfc, 0 0 0 1px #f0f0f0; }
.actions .default {
  border-color: #3c7fb1;
  background: linear-gradient(#eaf6fd, #d9f0fc 48%, #bee6fd 50%, #a7d9f5);
  box-shadow: inset 0 0 0 2px #38c8f4;
}
```
